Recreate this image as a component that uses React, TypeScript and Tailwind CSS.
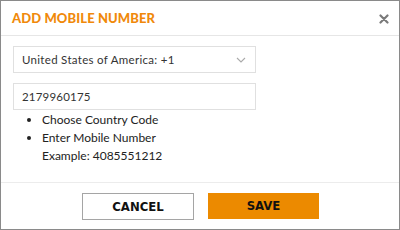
import React from "react";

const body = { fontFamily: "Lato, 'Open Sans', sans-serif" };
const condensed = { fontFamily: "'Liberation Sans Narrow', 'DejaVu Sans Condensed', 'Roboto', sans-serif" };

export default function App() {
  return (
    <div className="w-[400px] h-[230px] bg-white border border-[#8a8a8a] flex flex-col" style={body}>
      <div className="h-[35px] flex items-center justify-between pl-[11px] pr-[10px] border-b border-[#e6e6e6]">
        <h1 className="text-[13px] font-black text-[#f0890a] tracking-[0.1px] pt-[2px]">
          ADD MOBILE NUMBER
        </h1>
        <svg width="10" height="10" viewBox="0 0 10 10" className="mt-[1px]">
          <path d="M1.5 1.5 L8.5 8.5 M8.5 1.5 L1.5 8.5" stroke="#7a7a7a" strokeWidth="2.2" strokeLinecap="round" />
        </svg>
      </div>

      <div className="flex-1 pl-[12px] pt-[10px]">
        <div className="w-[243px] h-[27px] border border-[#e0e0e0] flex items-center justify-between pl-[8px] pr-[9px]">
          <span className="text-[11.5px] tracking-[0.3px] text-[#333]">United States of America: +1</span>
          <svg width="10" height="6" viewBox="0 0 10 6">
            <path d="M1 1 L5 5 L9 1" stroke="#aaa" strokeWidth="1.1" fill="none" />
          </svg>
        </div>
        <div className="w-[243px] h-[27px] border border-[#e0e0e0] flex items-center pl-[8px] mt-[10px]">
          <span className="text-[11.5px] tracking-[0.2px] text-[#333]">2179960175</span>
        </div>
        <ul className="mt-[1px] pl-[29px] text-[12px] text-[#222] leading-[18px] list-disc">
          <li>Choose Country Code</li>
          <li>
            Enter Mobile Number
            <div>Example: 4085551212</div>
          </li>
        </ul>
      </div>

      <div className="h-[47px] border-t border-[#ececec] flex items-start pt-[10px] pl-[81px] gap-[14px]">
        <button
          className="w-[112px] h-[27px] border border-[#a5a5a5] bg-white text-[#111] text-[13px] font-bold"
          style={condensed}
        >
          CANCEL
        </button>
        <button
          className="w-[111px] h-[26px] bg-[#ec8a00] text-[#111] text-[13px] font-bold"
          style={condensed}
        >
          SAVE
        </button>
      </div>
    </div>
  );
}
